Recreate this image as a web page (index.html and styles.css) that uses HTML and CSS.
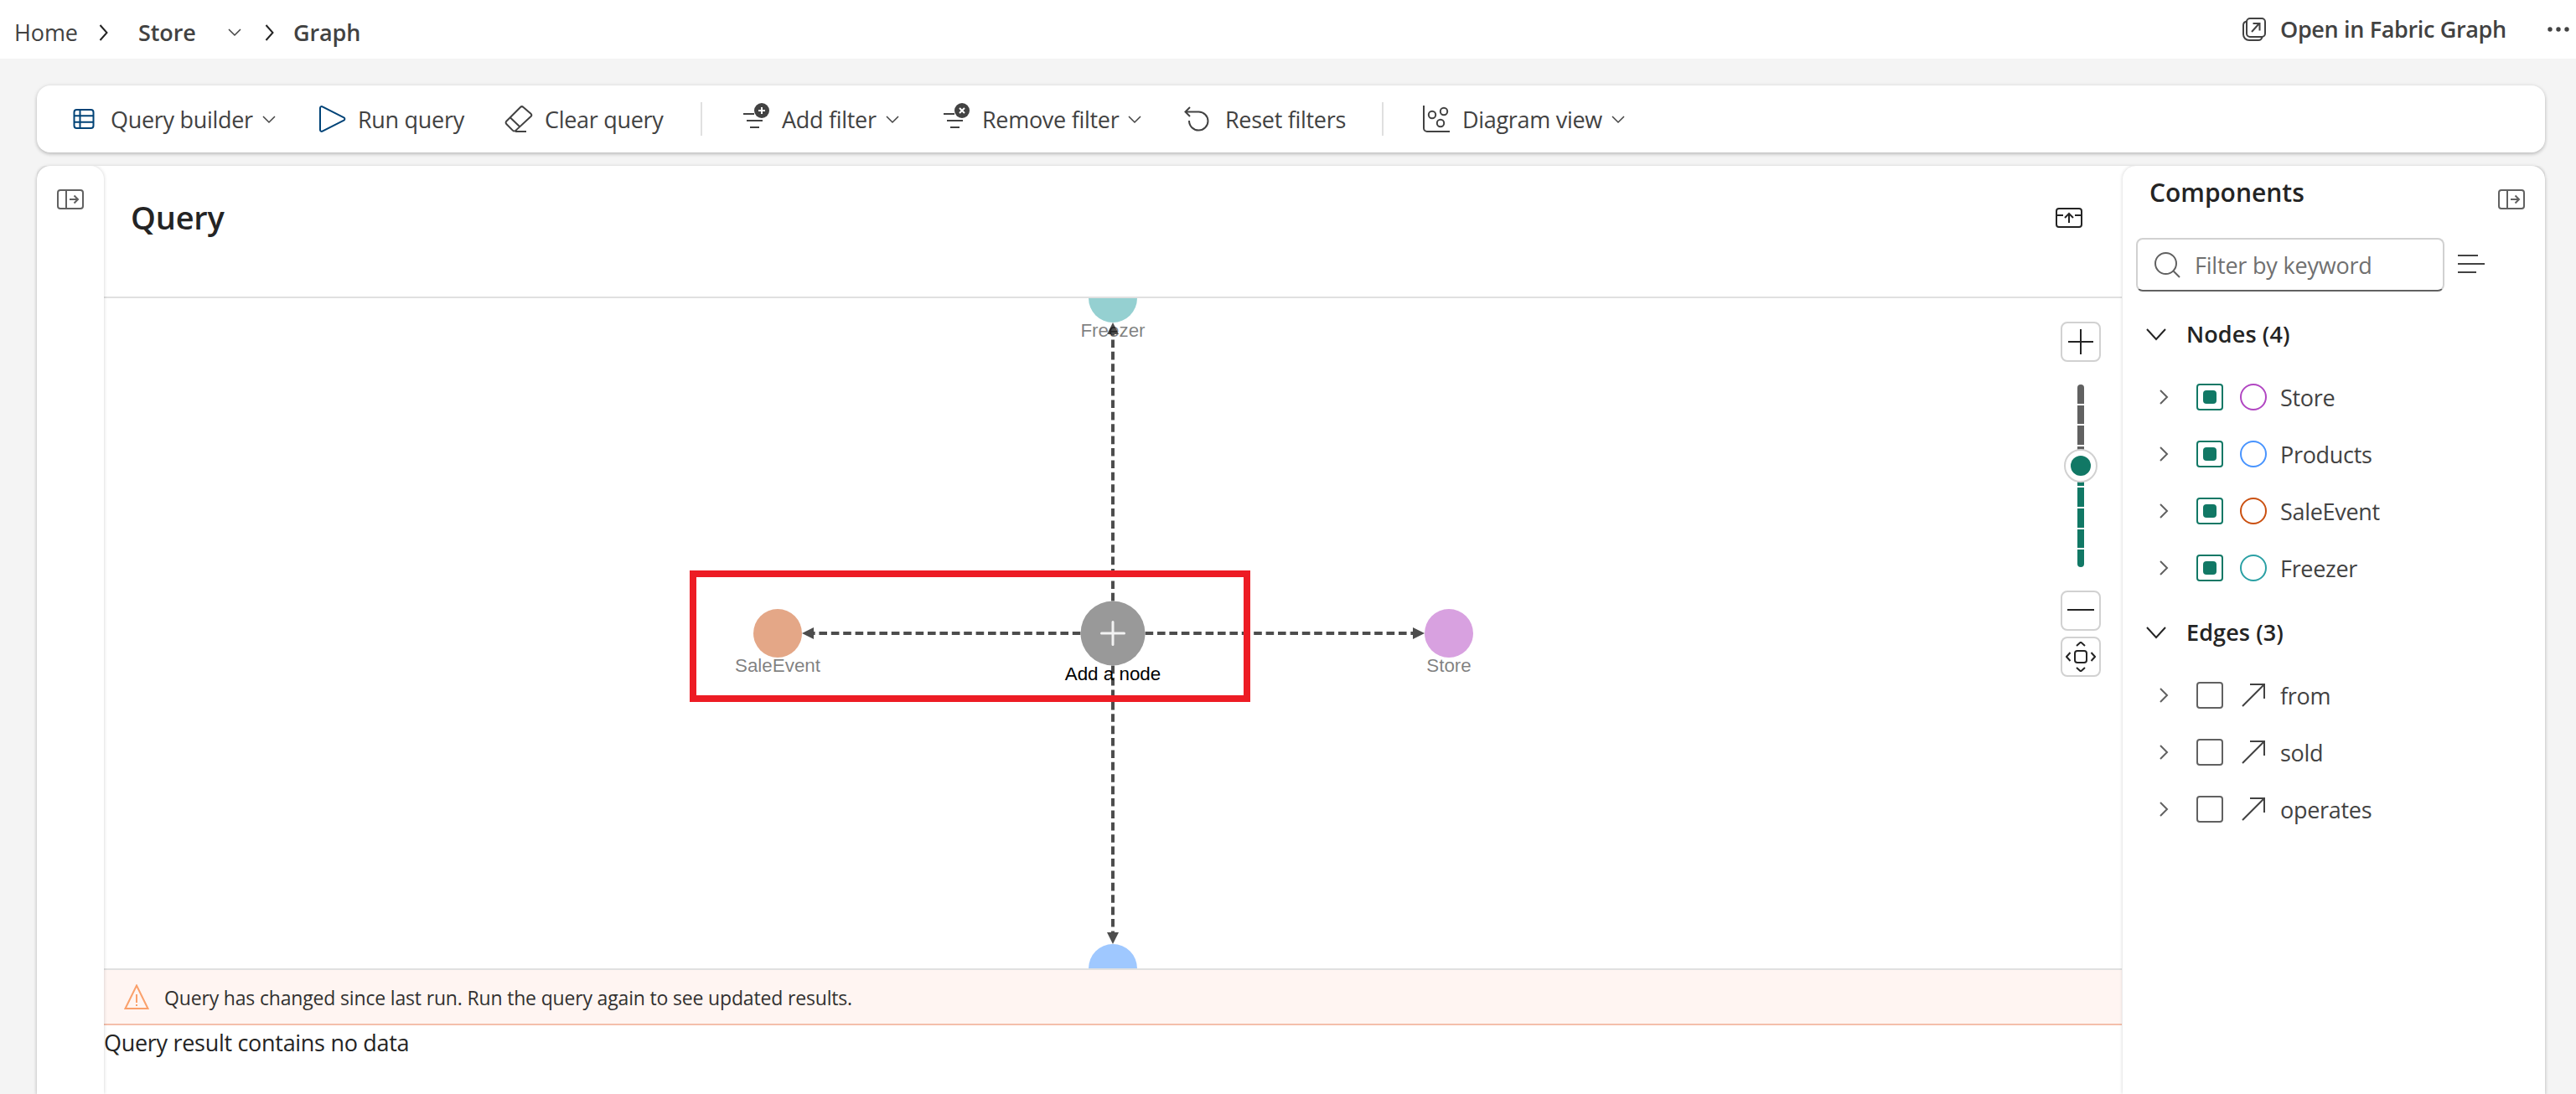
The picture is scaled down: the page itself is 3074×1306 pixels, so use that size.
FILE: index.html
```html
<!DOCTYPE html>
<html lang="en">

<head>
  <meta charset="utf-8">
  <title>Graph</title>
  <link rel="stylesheet" href="styles.css">
</head>

<body>
  <svg class="sprite">
    <symbol id="chev-down" viewBox="0 0 16 10"><path d="M1 1l7 7 7-7"/></symbol>
    <symbol id="chev-right" viewBox="0 0 12 18"><path d="M2 1l8 8-8 8"/></symbol>
    <symbol id="filter" viewBox="0 0 32 32"><path d="M1 14h13M5 22h19M9 30h11"/><circle cx="23" cy="10" r="9"/></symbol>
    <symbol id="panel" viewBox="0 0 32 24"><rect x="1" y="1" width="30" height="22" rx="3"/><path d="M11 1v22M15 12h10M20.500 7.500l4.500 4.500-4.500 4.500"/></symbol>
    <symbol id="arrow" viewBox="0 0 28 28"><path d="M1 27L26 2M10 1h17v17"/></symbol>
  </svg>

  <header class="header">
    <nav class="breadcrumb">
      <span class="crumb home">Home</span>
      <svg class="icon crumb-sep" width="12" height="20" viewBox="0 0 12 20"><path d="M1.500 1l8 9-8 9"/></svg>
      <b class="crumb store">Store</b>
      <svg class="icon thin store-chev" width="16" height="10"><use href="#chev-down"/></svg>
      <svg class="icon crumb-sep" width="12" height="20" viewBox="0 0 12 20"><path d="M1.500 1l8 9-8 9"/></svg>
      <b class="crumb graph-crumb">Graph</b>
    </nav>
    <div class="header-actions">
      <svg class="icon" width="28" height="28" viewBox="0 0 28 28"><rect x="5" y="1" width="22" height="22" rx="4"/><path d="M5 4.500C2.500 5 1 7 1 9v11c0 4 3 7 7 7h11c2 0 4-1.500 4.500-4M11 17L20 7M12.500 7H20.500v8.500"/></svg>
      <span class="open-label">Open in Fabric Graph</span>
      <svg class="dots" width="28" height="6" viewBox="0 0 28 6"><circle cx="3" cy="3" r="2.700"/><circle cx="13" cy="3" r="2.700"/><circle cx="23" cy="3" r="2.700"/></svg>
    </div>
  </header>

  <div class="toolbar">
    <div class="tool builder">
      <svg class="icon blue" width="26" height="24" viewBox="0 0 26 24"><rect x="1.500" y="1" width="23" height="22" rx="3"/><path d="M1.500 8.300h23M1.500 15.700h23M8.500 1v22"/></svg>
      <span class="label">Query builder</span>
      <svg class="icon thin" width="16" height="10"><use href="#chev-down"/></svg>
    </div>
    <div class="tool run">
      <svg class="icon blue" width="32" height="32" viewBox="0 0 32 32"><path d="M1 3v26c0 1.500 1.500 2.400 2.800 1.600l25.600-13c1.300-.7 1.300-2.500 0-3.200L3.800 1.400C2.500.6 1 1.500 1 3z"/></svg>
      <span class="label">Run query</span>
    </div>
    <div class="tool clear">
      <svg class="icon" width="34" height="32" viewBox="0 0 34 32"><path d="M19 2L2.500 18.500c-1.200 1.200-1.200 2.600 0 3.800l7.300 7.300c1.200 1.200 2.600 1.200 3.800 0L31.500 13c1-1 1-2.200 0-3.200L22.500 2c-1-1-2.500-1-3.500 0zM7 14.500l11.500 11M13 31h13"/></svg>
      <span class="label">Clear query</span>
    </div>
    <div class="divider"></div>
    <div class="tool add">
      <svg class="icon filter" width="32" height="32"><use href="#filter"/><path class="badge" d="M23 6v8M19 10h8"/></svg>
      <span class="label">Add filter</span>
      <svg class="icon thin" width="16" height="10"><use href="#chev-down"/></svg>
    </div>
    <div class="tool remove">
      <svg class="icon filter" width="32" height="32"><use href="#filter"/><path class="badge" d="M20 7l6 6M26 7l-6 6"/></svg>
      <span class="label">Remove filter</span>
      <svg class="icon thin" width="16" height="10"><use href="#chev-down"/></svg>
    </div>
    <div class="tool reset">
      <svg class="icon" width="30" height="32" viewBox="0 0 30 32"><path d="M7 2L1.500 7.500 7 13M2 7.500h15.500a11 11 0 0 1 0 22c-6.500 0-11.500-5-11.500-11.500"/></svg>
      <span class="label">Reset filters</span>
    </div>
    <div class="divider"></div>
    <div class="tool diagram">
      <svg class="icon" width="32" height="32" viewBox="0 0 32 32"><path d="M1 0v27a4 4 0 0 0 4 4h27"/><circle cx="11" cy="11" r="4.200"/><circle cx="25" cy="7" r="4.200"/><circle cx="21" cy="21" r="4.200"/></svg>
      <span class="label">Diagram view</span>
      <svg class="icon thin" width="16" height="10"><use href="#chev-down"/></svg>
    </div>
  </div>

  <div class="workspace">
    <aside class="rail">
      <svg class="icon gray" width="32" height="24"><use href="#panel"/></svg>
    </aside>

    <main class="query">
      <div class="query-head">
        <h1>Query</h1>
        <svg class="icon dark" width="32" height="24" viewBox="0 0 32 24"><rect x="1" y="1" width="30" height="22" rx="3"/><path d="M1 9h8M23 9h8M16 18V7M11 12l5-5 5 5"/></svg>
      </div>

      <div class="canvas">
        <svg class="graph" width="2408" height="800" viewBox="124 356 2408 800">
          <g class="edges">
            <path d="M1328 756H970"/>
            <path d="M1328 756H1687"/>
            <path d="M1328 756V398"/>
            <path d="M1328 756V1114"/>
          </g>
          <g class="heads">
            <path d="M957 756l14-7v14z"/>
            <path d="M1700 756l-14-7v14z"/>
            <path d="M1328 385l-7 14h14z"/>
            <path d="M1328 1127l-7-14h14z"/>
          </g>
          <circle cx="1328" cy="356" r="29" fill="#95d0d1"/>
          <circle cx="928" cy="756" r="29" fill="#e4a787"/>
          <circle cx="1729" cy="756" r="29" fill="#d8a1e0"/>
          <circle cx="1328" cy="1156" r="29" fill="#9fc8ff"/>
          <circle cx="1328" cy="756" r="38.500" fill="#999"/>
          <path class="plus" d="M1328 742.500v27M1314.500 756h27"/>
          <text x="1328" y="402">Freezer</text>
          <text x="928" y="802">SaleEvent</text>
          <text x="1729" y="802">Store</text>
          <text class="current" x="1328" y="812">Add a node</text>
          <rect class="highlight" x="827" y="685" width="661" height="149"/>
        </svg>
        <div class="zoom">
          <button><svg class="icon dark" width="30" height="30" viewBox="0 0 30 30"><path d="M15 0v30M0 15h30"/></svg></button>
          <svg class="slider" width="40" height="218" viewBox="0 0 40 218">
            <rect x="16" y="0" width="8" height="98" rx="4" fill="#616161"/>
            <rect x="16" y="98" width="8" height="120" rx="4" fill="#117865"/>
            <path class="ticks" d="M15 24h10M15 48h10M15 73h10M15 122h10M15 147h10M15 172h10M15 196h10"/>
            <circle cx="20" cy="97" r="19" fill="#fff" stroke="#d1d1d1" stroke-width="2"/>
            <circle cx="20" cy="97" r="12" fill="#117865"/>
          </svg>
          <button><svg class="icon dark" width="32" height="30" viewBox="0 0 32 30"><path d="M0 14h32"/></svg></button>
          <button><svg class="icon dark" width="36" height="36" viewBox="0 0 36 36"><rect x="11" y="11" width="14" height="14" rx="3"/><path d="M13 5l5-4.500L23 5M13 31l5 4.500 5-4.500M5.500 13L1 18l4.500 5M30.500 13l4.500 5-4.500 5"/></svg></button>
        </div>
      </div>

      <div class="warning">
        <svg width="30" height="30" viewBox="0 0 30 30"><path d="M15 1.500L28.500 29h-27zM15 12v10M15 24v2"/></svg>
        <span>Query has changed since last run. Run the query again to see updated results.</span>
      </div>
      <p class="result">Query result contains no data</p>
    </main>

    <aside class="components">
      <div class="components-head">
        <h2>Components</h2>
        <svg class="icon gray" width="32" height="24"><use href="#panel"/></svg>
      </div>
      <div class="search-row">
        <div class="search">
          <svg class="icon gray" width="31" height="31" viewBox="0 0 31 31"><circle cx="13.500" cy="13.500" r="12.500"/><path d="M22 22l8 8"/></svg>
          <span>Filter by keyword</span>
        </div>
        <svg class="icon" width="32" height="22" viewBox="0 0 32 22"><path d="M0 1h24M0 11h32M0 21h22"/></svg>
      </div>

      <div class="group">
        <svg class="icon dark" width="24" height="15" viewBox="0 0 24 15"><path d="M1 1l11 12L23 1"/></svg>
        <h3>Nodes (4)</h3>
      </div>
      <ul>
        <li>
          <svg class="icon gray" width="12" height="18"><use href="#chev-right"/></svg>
          <i class="check on"></i><i class="ring store-ring"></i><span>Store</span>
        </li>
        <li>
          <svg class="icon gray" width="12" height="18"><use href="#chev-right"/></svg>
          <i class="check on"></i><i class="ring products-ring"></i><span>Products</span>
        </li>
        <li>
          <svg class="icon gray" width="12" height="18"><use href="#chev-right"/></svg>
          <i class="check on"></i><i class="ring sale-ring"></i><span>SaleEvent</span>
        </li>
        <li>
          <svg class="icon gray" width="12" height="18"><use href="#chev-right"/></svg>
          <i class="check on"></i><i class="ring freezer-ring"></i><span>Freezer</span>
        </li>
      </ul>

      <div class="group">
        <svg class="icon dark" width="24" height="15" viewBox="0 0 24 15"><path d="M1 1l11 12L23 1"/></svg>
        <h3>Edges (3)</h3>
      </div>
      <ul>
        <li>
          <svg class="icon gray" width="12" height="18"><use href="#chev-right"/></svg>
          <i class="check"></i><svg class="icon edge" width="28" height="28"><use href="#arrow"/></svg><span>from</span>
        </li>
        <li>
          <svg class="icon gray" width="12" height="18"><use href="#chev-right"/></svg>
          <i class="check"></i><svg class="icon edge" width="28" height="28"><use href="#arrow"/></svg><span>sold</span>
        </li>
        <li>
          <svg class="icon gray" width="12" height="18"><use href="#chev-right"/></svg>
          <i class="check"></i><svg class="icon edge" width="28" height="28"><use href="#arrow"/></svg><span>operates</span>
        </li>
      </ul>
    </aside>
  </div>
</body>

</html>
```

FILE: styles.css
```css
* {
  box-sizing: border-box;
}

body {
  margin: 0;
  height: 1306px;
  overflow: hidden;
  display: flex;
  flex-direction: column;
  background: #f4f4f4;
  color: #424242;
  font: 27px/36px "Open Sans", "Noto Sans", sans-serif;
  letter-spacing: -0.3px;
  white-space: nowrap;
}

h1,
h2,
h3,
p,
ul {
  margin: 0;
  padding: 0;
}

h1,
h2,
h3,
b {
  font-weight: 600;
}

svg {
  flex: none;
  display: block;
}

/* icons */

.sprite {
  position: absolute;
  width: 0;
  height: 0;
}

.icon {
  fill: none;
  stroke: #424242;
  stroke-width: 2;
}

.thin {
  stroke-width: 1.5;
}

.blue {
  stroke: #004377;
}

.gray {
  stroke: #616161;
}

.dark {
  stroke: #242424;
}

/* header */

.header {
  flex: none;
  height: 70px;
  background: #fff;
  display: flex;
  justify-content: space-between;
}

.breadcrumb {
  display: flex;
  align-items: center;
  height: 77px;
  padding-left: 17px;
  letter-spacing: -0.1px;
}

.home {
  width: 101px;
}

.store {
  width: 107px;
}

.crumb-sep {
  stroke: #242424;
}

.crumb-sep + .store {
  margin-left: 35px;
}

.store-chev {
  margin-right: 28px;
}

.graph-crumb {
  margin-left: 22px;
}

.header-actions {
  display: flex;
  align-items: center;
  height: 69px;
  padding-right: 6px;
}

.open-label {
  width: 336px;
  padding-left: 17px;
  font-weight: 600;
  letter-spacing: -0.35px;
}

.dots {
  fill: #424242;
}

/* toolbar */

.toolbar {
  flex: none;
  height: 80px;
  margin: 32px 37px 16px 44px;
  padding-left: 43px;
  border-radius: 16px;
  background: #fff;
  box-shadow: 0 2px 4px rgba(0, 0, 0, .2), 0 0 5px rgba(0, 0, 0, .08);
  display: flex;
  align-items: center;
}

.tool {
  display: flex;
  align-items: center;
}

.tool .label {
  margin: 1px 11px 0 19px;
}

.tool .thin {
  margin-top: 2px;
}

.builder {
  width: 294px;
}

.run {
  width: 221px;
}

.run .label {
  margin-left: 14px;
}

.clear {
  width: 234px;
}

.clear .label {
  margin-left: 14px;
}

.add {
  width: 239px;
  margin-left: 48px;
}

.remove {
  width: 288px;
}

.remove .label,
.add .label {
  margin-left: 15px;
}

.reset {
  width: 236px;
}

.diagram {
  margin-left: 47px;
}

.diagram .label {
  margin-left: 15px;
}

.divider {
  width: 2px;
  height: 40px;
  background: #e0e0e0;
}

.filter {
  margin-top: -8px;
}

#filter circle {
  fill: #424242;
  stroke: none;
}

.badge {
  stroke: #fff;
}

/* workspace */

.workspace {
  flex: 1;
  margin: 0 37px 0 44px;
  display: flex;
  background: #fff;
  border-radius: 16px 16px 0 0;
  box-shadow: 0 2px 4px rgba(0, 0, 0, .2), 0 0 5px rgba(0, 0, 0, .08);
}

.rail {
  width: 80px;
  padding: 28px 0 0 24px;
  border-radius: 16px 16px 0 0;
  box-shadow: 0 0 4px rgba(0, 0, 0, .18);
  clip-path: inset(0 -6px 0 0);
}

.query {
  width: 2408px;
}

.query-head {
  height: 158px;
  padding: 50px 47px 0 32px;
  border-bottom: 2px solid #e0e0e0;
  display: flex;
  justify-content: space-between;
}

h1 {
  margin-top: -15px;
  color: #242424;
  font-size: 38px;
  line-height: 52px;
  letter-spacing: -0.2px;
}

.canvas {
  position: relative;
  height: 800px;
}

.edges {
  fill: none;
  stroke: #4d4d4d;
  stroke-width: 4;
  stroke-dasharray: 9.6 4.8;
  stroke-dashoffset: 4.6;
}

.heads {
  fill: #4d4d4d;
}

.plus {
  stroke: #f2f2f2;
  stroke-width: 3;
  stroke-linecap: round;
}

.graph text {
  font: 22.4px "Liberation Sans", Arial, sans-serif;
  letter-spacing: 0;
  text-anchor: middle;
  fill: rgba(0, 0, 0, .5);
}

.graph .current {
  fill: #000;
}

.highlight {
  fill: none;
  stroke: #ed1c24;
  stroke-width: 8;
}

/* zoom controls float over the graph */

.zoom {
  position: absolute;
  top: 28px;
  right: 25px;
  display: flex;
  flex-direction: column;
  align-items: center;
}

.zoom button {
  width: 48px;
  height: 48px;
  padding: 0;
  border: 2px solid #d1d1d1;
  border-radius: 8px;
  background: #fff;
  display: flex;
  align-items: center;
  justify-content: center;
}

.zoom button:last-child {
  margin-top: 7px;
}

.slider {
  margin: 27px 0 28px;
}

.ticks {
  stroke: #fff;
  stroke-width: 2;
}

.warning {
  height: 68px;
  padding-left: 24px;
  border-top: 2px solid #e0e0e0;
  border-bottom: 2px solid #f4bfab;
  background: #fff5f2;
  display: flex;
  align-items: center;
  gap: 18px;
  color: #323130;
  font-size: 23px;
  letter-spacing: -0.17px;
}

.warning span {
  margin-top: 2px;
}

.warning svg {
  fill: none;
  stroke: #faa06b;
  stroke-width: 2;
}

.result {
  margin-top: 3px;
  color: #242424;
}

/* components */

.components {
  flex: 1;
  padding: 0 24px 0 16px;
  border-radius: 16px 16px 0 0;
  box-shadow: 0 0 4px rgba(0, 0, 0, .18);
  clip-path: inset(0 0 0 -6px);
  margin-left: 1px;
}

.components-head {
  height: 86px;
  padding: 11px 0 0 16px;
  display: flex;
  justify-content: space-between;
}

.components-head svg {
  margin-top: 17px;
}

h2 {
  color: #242424;
  font-size: 30px;
  line-height: 42px;
  letter-spacing: 0;
}

.search-row {
  display: flex;
  align-items: center;
  gap: 16px;
}

.search {
  width: 368px;
  height: 64px;
  padding-left: 20px;
  border: 2px solid #d1d1d1;
  border-bottom-color: #616161;
  border-radius: 8px;
  display: flex;
  align-items: center;
  gap: 17px;
  color: #707070;
  letter-spacing: -0.2px;
}

.search span {
  margin-top: 2px;
}

.search + svg {
  margin-top: -2px;
}

.group {
  height: 68px;
  margin-top: 17px;
  padding-left: 12px;
  display: flex;
  align-items: center;
  gap: 24px;
}

ul + .group {
  margin-top: 9px;
}

h3 {
  color: #242424;
  font-size: 27px;
  letter-spacing: 0.1px;
}

ul {
  padding-top: 7px;
  list-style: none;
}

li {
  height: 68px;
  padding-left: 27px;
  display: flex;
  align-items: center;
}

li span {
  margin-top: 2px;
}

.check {
  width: 32px;
  height: 32px;
  margin: 0 20px 0 33px;
  border: 2px solid #616161;
  border-radius: 4px;
  display: flex;
  align-items: center;
  justify-content: center;
}

.on {
  border-color: #117865;
}

.on::after {
  content: "";
  width: 16px;
  height: 16px;
  border-radius: 4px;
  background: #117865;
}

.ring {
  width: 32px;
  height: 32px;
  border: 2px solid;
  border-radius: 50%;
}

.ring + span {
  margin-left: 16px;
}

.edge {
  margin: 0 18px 0 2px;
}

.store-ring {
  border-color: #b146c2;
}

.products-ring {
  border-color: #4894fe;
}

.sale-ring {
  border-color: #ca5010;
}

.freezer-ring {
  border-color: #2aa0a4;
}
```
